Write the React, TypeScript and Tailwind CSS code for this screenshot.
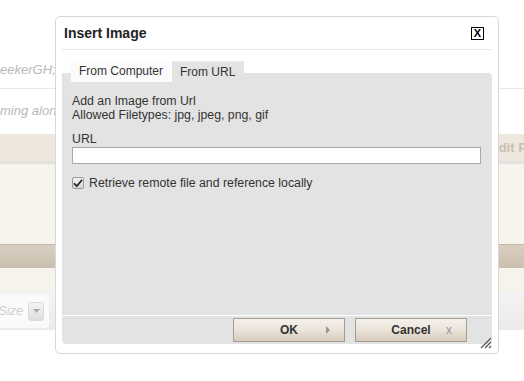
import React from "react";

function Check() {
  return (
    <span className="flex h-[12px] w-[12px] items-center justify-center rounded-[2px] border border-[#9a9a9a] bg-gradient-to-b from-[#f4f4f4] to-[#d6d6d6]">
      <svg width="10" height="9" viewBox="0 0 10 9">
        <path d="M1.5 4.8 L3.8 7.2 L8.6 1.4" fill="none" stroke="#2a2a2a" strokeWidth="1.8" strokeLinecap="round" strokeLinejoin="round" />
      </svg>
    </span>
  );
}

function Button({ label, icon }: { label: string; icon: React.ReactNode }) {
  return (
    <button className="relative flex h-[24px] w-[112px] items-center justify-center border border-[#a59d94] bg-gradient-to-b from-[#f4f0ea] via-[#ebe4da] to-[#d7cbba] text-[12px] font-bold leading-none text-[#333]">
      <span>{label}</span>
      <span className="absolute right-[14px] top-0 flex h-full items-center">{icon}</span>
    </button>
  );
}

export default function App() {
  return (
    <div
      className="relative h-[381px] w-[524px] overflow-hidden bg-white"
      style={{ fontFamily: '"Liberation Sans", Arial, sans-serif' }}
    >
      {/* background page */}
      <div className="flex flex-col">
        <div className="h-[89px] border-b border-[#e8e8e8] pt-[62px]">
          <div className="whitespace-nowrap text-[13px] italic leading-[16px] text-[#b9b9b9]">eekerGH; have been following along</div>
        </div>
        <div className="h-[45px] pt-[14px]">
          <div className="whitespace-nowrap text-[13px] italic leading-[16px] text-[#b9b9b9]">ming along with the rest of them</div>
        </div>
        <div className="flex h-[27px] items-center bg-[#ede7dd]">
          <div className="w-[490px] shrink-0" />
          <div className="whitespace-nowrap text-[13px] font-bold text-[#c9c0b3]">Edit Post</div>
        </div>
        <div className="h-[3px] bg-[#e4e1dc]" />
        <div className="h-[80px] bg-[#f7f3ed]" />
        <div className="h-[24px] border-t border-[#c3b8a8] bg-gradient-to-b from-[#d9cfc1] to-[#cbbfae]" />
        <div className="h-[24px] bg-[#f6f2ec]" />
        <div className="flex h-[38px] items-center bg-gradient-to-b from-[#f3f3f3] to-[#ebebeb]">
          <div className="flex h-[34px] w-[49px] items-center rounded-r-[4px] bg-[#fafafa]">
            <span className="ml-[-2px] text-[13px] italic text-[#cfcfcf]">Size</span>
            <span className="ml-[5px] flex h-[19px] w-[16px] items-center justify-center rounded-[3px] border border-[#dcdcdc] bg-gradient-to-b from-[#f4f4f4] to-[#dedede]">
              <svg width="7" height="4" viewBox="0 0 7 4"><path d="M0 0 L7 0 L3.5 4 Z" fill="#aaa" /></svg>
            </span>
          </div>
        </div>
      </div>

      {/* dialog */}
      <div className="absolute left-[55px] top-[16px] flex h-[338px] w-[444px] flex-col rounded-[5px] border border-[#d8d8d8] bg-white px-[6px]">
        <div className="flex h-[33px] shrink-0 items-center border-b border-[#e6e6e6] pl-[2px] pr-[8px]">
          <span className="text-[14px] font-bold text-[#222]">Insert Image</span>
          <span className="ml-auto flex h-[13px] w-[13px] items-center justify-center border border-black text-[11px] font-bold leading-none text-black">X</span>
        </div>

        <div className="relative z-10 mb-[-9px] ml-[9px] mt-[11px] flex h-[21px] shrink-0 whitespace-nowrap text-[12px] leading-[21px] text-[#333]">
          <div className="w-[101px] shrink-0 bg-[#fbfbfb] px-[8px]">From Computer</div>
          <div className="w-[72px] shrink-0 border-t border-[#ececec] bg-[#e3e3e3] px-[8px] leading-[20px]">From URL</div>
        </div>

        <div className="flex h-[242px] shrink-0 flex-col rounded-tr-[4px] bg-[#e3e3e3] pl-[10px] pt-[21px] text-[12.3px] leading-[14px] text-[#333]">
          <div>Add an Image from Url</div>
          <div>Allowed Filetypes: jpg, jpeg, png, gif</div>
          <div className="mt-[10px]">URL</div>
          <div className="mt-[1px] h-[17px] w-[409px] border border-[#a8a8a8] bg-white" />
          <div className="mt-[12px] flex items-center">
            <Check />
            <span className="ml-[5px]">Retrieve remote file and reference locally</span>
          </div>
        </div>

        <div className="mt-[1px] flex h-[28px] shrink-0 items-start justify-end gap-[10px] rounded-b-[4px] bg-[#e3e3e3] pr-[25px] pt-[2px]">
          <Button
            label="OK"
            icon={<svg width="4" height="8" viewBox="0 0 4 8"><path d="M0 0 L4 4 L0 8 Z" fill="#9a948c" /></svg>}
          />
          <Button
            label="Cancel"
            icon={<span className="text-[12px] font-normal text-[#999]">x</span>}
          />
        </div>

        <svg className="absolute bottom-[4px] right-[6px]" width="12" height="12" viewBox="0 0 12 12">
          <path d="M11 1 L1 11 M11 5 L5 11 M11 9 L9 11" stroke="#555" strokeWidth="1.2" />
        </svg>
      </div>
    </div>
  );
}
